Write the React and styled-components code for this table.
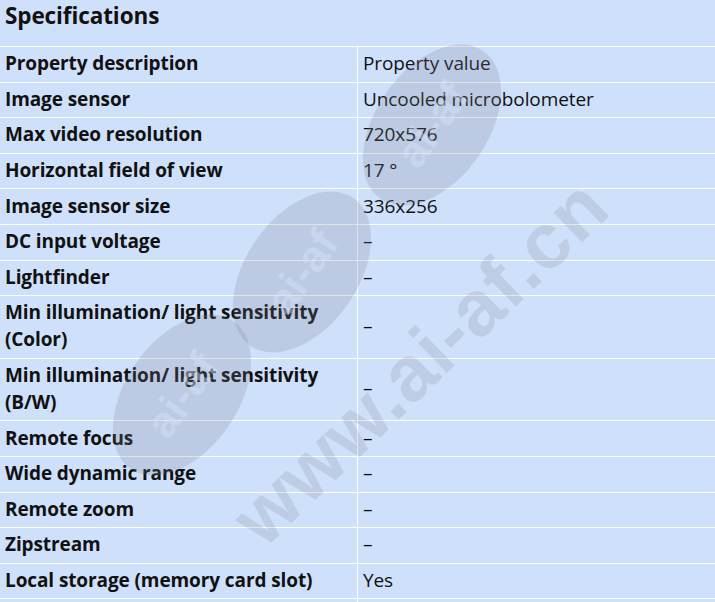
import styled, { createGlobalStyle } from "styled-components";

const GlobalStyle = createGlobalStyle`
  html, body {
    margin: 0;
    padding: 0;
    background: #cfe0fb;
  }
  body {
    font-family: "Open Sans", "Noto Sans", "Liberation Sans", sans-serif;
    color: #111;
  }
`;

const Page = styled.div`
  position: relative;
  width: 715px;
  height: 602px;
  overflow: hidden;
  background: #cfe0fb;
`;

const Title = styled.h2`
  margin: 0;
  height: 46px;
  padding: 0 5px;
  box-sizing: border-box;
  font-size: 22.5px;
  font-weight: 700;
  line-height: 32px;
  letter-spacing: -0.1px;
`;

const SpecList = styled.div`
  display: flex;
  flex-direction: column;
  border-top: 1px solid #fff;
`;

const Row = styled.div`
  display: grid;
  grid-template-columns: 357px 1fr;
  border-bottom: 1px solid #fff;
  min-height: 35.6px;
  box-sizing: border-box;
`;

const Cell = styled.div`
  display: flex;
  align-items: center;
  padding: 3.2px 5px 4.4px;
  font-size: 19px;
  line-height: 27px;
  letter-spacing: -0.1px;
`;

const NameCell = styled(Cell)`
  font-weight: 700;
`;

const ValueCell = styled(Cell)`
  font-weight: 400;
  border-left: 1px solid #fff;
`;

const Watermark = styled.div`
  position: absolute;
  inset: 0;
  pointer-events: none;
`;

const BigMark = styled.div`
  position: absolute;
  left: 420px;
  top: 362px;
  transform: translate(-50%, -50%) rotate(-44deg);
  font-family: "Liberation Sans", sans-serif;
  font-weight: 700;
  font-size: 78px;
  letter-spacing: 1px;
  color: rgba(125, 128, 140, 0.2);
  white-space: nowrap;
`;

const Badge = styled.div`
  position: absolute;
  left: ${(p) => p.$x}px;
  top: ${(p) => p.$y}px;
  width: 180px;
  height: 112px;
  border-radius: 50%;
  background: rgba(125, 128, 140, 0.22);
  transform: translate(-50%, -50%) rotate(-55deg);
  display: flex;
  align-items: center;
  justify-content: center;
  font-family: "Liberation Sans", sans-serif;
  font-weight: 700;
  font-size: 44px;
  color: rgba(215, 228, 250, 0.45);
`;

const specs = [
  ["Property description", "Property value"],
  ["Image sensor", "Uncooled microbolometer"],
  ["Max video resolution", "720x576"],
  ["Horizontal field of view", "17 °"],
  ["Image sensor size", "336x256"],
  ["DC input voltage", "–"],
  ["Lightfinder", "–"],
  ["Min illumination/ light sensitivity (Color)", "–"],
  ["Min illumination/ light sensitivity (B/W)", "–"],
  ["Remote focus", "–"],
  ["Wide dynamic range", "–"],
  ["Remote zoom", "–"],
  ["Zipstream", "–"],
  ["Local storage (memory card slot)", "Yes"],
  ["", ""],
];

export default function App() {
  return (
    <Page>
      <GlobalStyle />
      <Title>Specifications</Title>
      <SpecList>
        {specs.map(([k, v], i) => (
          <Row key={i}>
            <NameCell>{k}</NameCell>
            <ValueCell>{v}</ValueCell>
          </Row>
        ))}
      </SpecList>
      <Watermark>
        <Badge $x={432} $y={125}>ai-af</Badge>
        <Badge $x={302} $y={272}>ai-af</Badge>
        <Badge $x={182} $y={395}>ai-af</Badge>
        <BigMark>www.ai-af.cn</BigMark>
      </Watermark>
    </Page>
  );
}
